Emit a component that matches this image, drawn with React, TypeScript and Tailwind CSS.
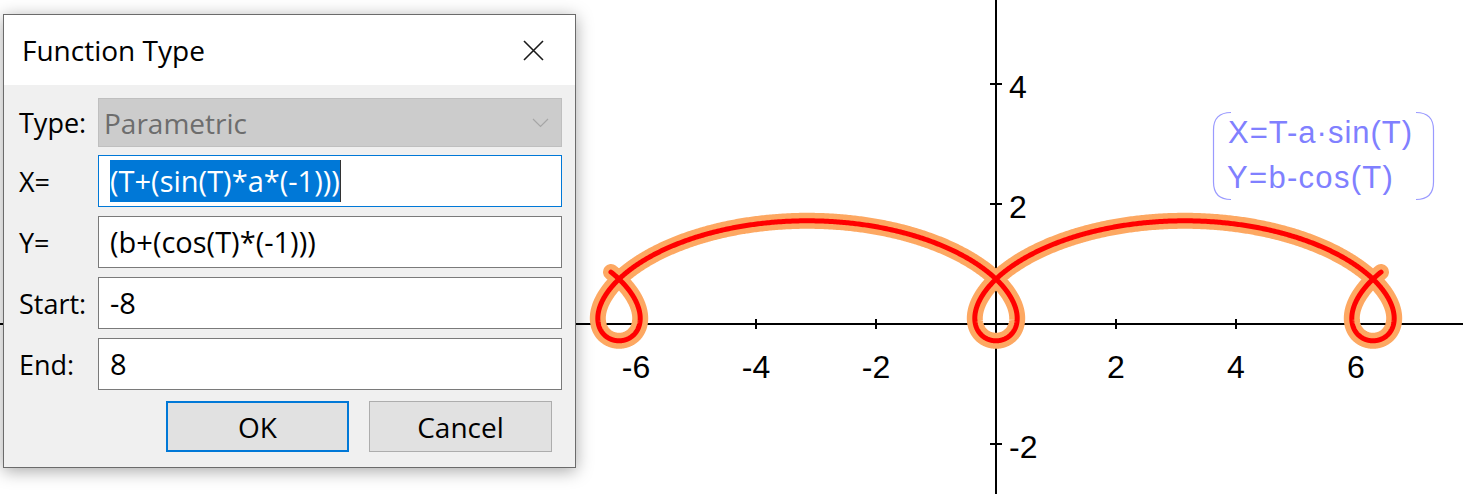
import React from "react";

const A = 1.6;
const B = 0.72;
const OX = 996;
const OY = 324;
const U = 60;

function curvePath() {
  let d = "";
  for (let i = 0; i <= 1600; i++) {
    const t = -8 + i * 0.01;
    const x = OX + U * (t - A * Math.sin(t));
    const y = OY - U * (B - Math.cos(t));
    d += (i ? "L" : "M") + x.toFixed(2) + " " + y.toFixed(2);
  }
  return d;
}

const xTicks = [-6, -4, -2, 2, 4, 6];
const yTicks = [4, 2, -2];

function Graph() {
  const d = curvePath();
  return (
    <svg width={1463} height={494} className="block" style={{ fontFamily: '"Liberation Sans", Arial, sans-serif' }}>
      <rect x={0} y={0} width={1463} height={494} fill="#ffffff" />
      <line x1={0} y1={OY} x2={1463} y2={OY} stroke="#000" strokeWidth={2} />
      <line x1={OX} y1={0} x2={OX} y2={494} stroke="#000" strokeWidth={2} />
      {xTicks.map((k) => (
        <g key={"x" + k}>
          <line x1={OX + k * U} y1={OY - 5} x2={OX + k * U} y2={OY + 5} stroke="#000" strokeWidth={2} />
          <text x={OX + k * U} y={378} fontSize={32} textAnchor="middle" fill="#000">
            {k < 0 ? "-" + Math.abs(k) : String(k)}
          </text>
        </g>
      ))}
      {yTicks.map((k) => (
        <g key={"y" + k}>
          <line x1={OX - 6} y1={OY - k * U} x2={OX + 6} y2={OY - k * U} stroke="#000" strokeWidth={2} />
          <text x={1009} y={OY - k * U + 14} fontSize={32} fill="#000">
            {k < 0 ? "-" + Math.abs(k) : String(k)}
          </text>
        </g>
      ))}
      <path d={d} fill="none" stroke="#fda862" strokeWidth={16} strokeLinecap="round" strokeLinejoin="round" />
      <path d={d} fill="none" stroke="#ff0000" strokeWidth={5} strokeLinecap="round" strokeLinejoin="round" />
      <path d="M1231 112.5 Q1213.5 112.5 1213.5 130 L1213.5 182 Q1213.5 199.5 1231 199.5" fill="none" stroke="#9a9aff" strokeWidth={1.2} />
      <path d="M1416 112.5 Q1433.5 112.5 1433.5 130 L1433.5 182 Q1433.5 199.5 1416 199.5" fill="none" stroke="#9a9aff" strokeWidth={1.2} />
      <text x={1228} y={143} fontSize={31} fill="#8080ff" letterSpacing={1}>
        X=T-a·sin(T)
      </text>
      <text x={1227} y={188} fontSize={31} fill="#8080ff" letterSpacing={1.3}>
        Y=b-cos(T)
      </text>
    </svg>
  );
}

function Field({ label, children, focused }: { label: string; children: React.ReactNode; focused?: boolean }) {
  return (
    <div className="flex items-center h-[52px]">
      <div className="w-[79px] shrink-0 text-[27px] text-black leading-none">{label}</div>
      <div
        className={
          "flex-1 h-[52px] bg-white flex items-center pl-[11px] border " +
          (focused ? "border-[#0078d7]" : "border-[#7a7a7a]")
        }
      >
        {children}
      </div>
    </div>
  );
}

function Dialog() {
  return (
    <div
      className="absolute left-[3px] top-[14px] w-[573px] h-[454px] border border-[#6b6b6b] bg-[#f0f0f0] flex flex-col shadow-[0_3px_16px_rgba(0,0,0,0.35)]"
      style={{ fontFamily: '"Open Sans", "Noto Sans", sans-serif' }}
    >
      <div className="h-[70px] bg-white flex items-center justify-between pl-[18px] pr-[31px]">
        <span className="text-[28px] text-black leading-none">Function Type</span>
        <svg width={21} height={21} viewBox="0 0 21 21">
          <path d="M1 1 L20 20 M20 1 L1 20" stroke="#1a1a1a" strokeWidth={1.6} />
        </svg>
      </div>
      <div className="flex flex-col pl-[15px] pr-[13px] pt-[13px]">
        <div className="flex items-center h-[49px]">
          <div className="w-[79px] shrink-0 text-[27px] text-black leading-none">Type:</div>
          <div className="flex-1 h-[49px] bg-[#cccccc] border border-[#bfbfbf] flex items-center justify-between pl-[5px] pr-[12px]">
            <span className="text-[28px] text-[#6d6d6d] leading-none">Parametric</span>
            <svg width={17} height={10} viewBox="0 0 17 10">
              <path d="M1 1 L8.5 8.5 L16 1" fill="none" stroke="#a6a6a6" strokeWidth={1.2} />
            </svg>
          </div>
        </div>
        <div className="flex flex-col gap-[9px] mt-[8px]">
          <Field label="X=" focused>
            <span className="bg-[#0078d7] text-white text-[29px] leading-[42px] h-[42px] flex items-center">
              (T+(sin(T)*a*(-1)))
            </span>
            <span className="w-px h-[42px] bg-[#333]" />
          </Field>
          <Field label="Y=">
            <span className="text-[29px] text-black">(b+(cos(T)*(-1)))</span>
          </Field>
          <Field label="Start:">
            <span className="text-[29px] text-black">-8</span>
          </Field>
          <Field label="End:">
            <span className="text-[29px] text-black">8</span>
          </Field>
        </div>
        <div className="flex justify-end gap-[20px] mt-[11px] pr-[10px]">
          <button className="w-[183px] h-[51px] bg-[#e1e1e1] border-2 border-[#0078d7] text-[28px] text-black leading-none">
            OK
          </button>
          <button className="w-[183px] h-[51px] bg-[#e1e1e1] border border-[#adadad] text-[28px] text-black leading-none">
            Cancel
          </button>
        </div>
      </div>
    </div>
  );
}

export default function App() {
  return (
    <div className="relative w-[1463px] h-[494px] overflow-hidden bg-white">
      <Graph />
      <Dialog />
    </div>
  );
}
